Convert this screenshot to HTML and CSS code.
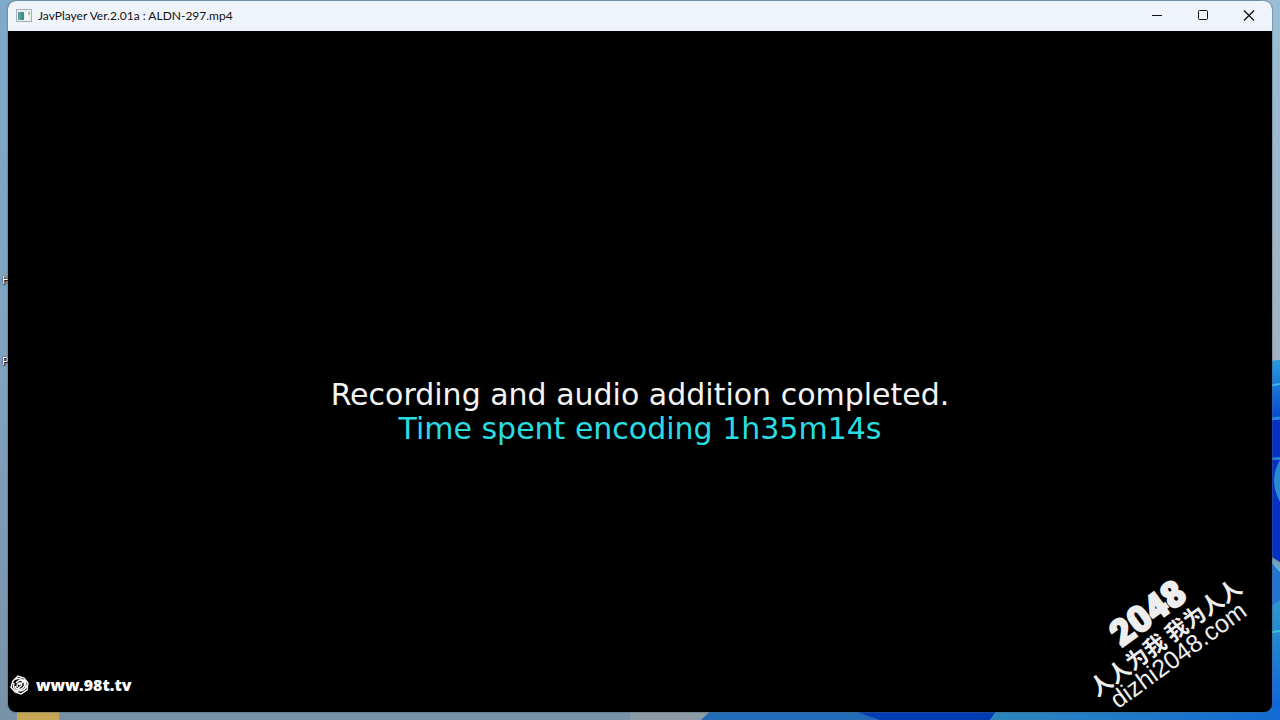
FILE: index.html
```html
<!DOCTYPE html>
<html lang="en">
  <head>
    <meta charset="UTF-8" />
    <meta name="viewport" content="width=device-width, initial-scale=1.0" />
    <title>JavPlayer Ver.2.01a : ALDN-297.mp4</title>
    <link rel="stylesheet" href="styles.css">
  </head>

  <body>
    <div class="desktop">
      <svg class="wallpaper" viewBox="0 0 1280 720" preserveAspectRatio="none" aria-hidden="true">
        <defs>
          <linearGradient id="sky" x1="0" y1="0" x2="0" y2="1">
            <stop offset="0" stop-color="#7eaaca" />
            <stop offset="0.5" stop-color="#80a3bf" />
            <stop offset="1" stop-color="#7892a8" />
          </linearGradient>
          <linearGradient id="side" x1="0" y1="0" x2="0" y2="1">
            <stop offset="0" stop-color="#98bed5" />
            <stop offset="1" stop-color="#a3b2c2" />
          </linearGradient>
          <linearGradient id="petal" x1="0" y1="0" x2="0" y2="1">
            <stop offset="0" stop-color="#289be0" />
            <stop offset="1" stop-color="#0746ce" />
          </linearGradient>
          <linearGradient id="low" x1="0" y1="0" x2="0" y2="1">
            <stop offset="0" stop-color="#2f99cc" />
            <stop offset="1" stop-color="#0b5fdd" />
          </linearGradient>
          <linearGradient id="edge" x1="0" y1="0" x2="1" y2="0">
            <stop offset="0" stop-color="#2e86bc" />
            <stop offset="1" stop-color="#126bd4" />
          </linearGradient>
        </defs>
        <rect width="1280" height="720" fill="url(#sky)" />
        <rect x="1260" width="20" height="362" fill="url(#side)" />
        <path d="M1260 364 Q1272 360 1280 360 V420 H1260Z" fill="url(#petal)" />
        <path d="M1260 387 L1280 384" stroke="#38b7e5" stroke-width="2" />
        <path d="M1260 420 L1280 418 V562 L1260 550Z" fill="#0631c4" />
        <path d="M1260 420 L1280 418" stroke="#2488df" stroke-width="3" />
        <path d="M1260 459 L1280 457 V502 Q1268 480 1280 460Z" fill="#278bd0" />
        <path d="M1260 550 Q1272 560 1280 571 V606 L1260 614Z" fill="#2475d2" />
        <path d="M1260 550 Q1272 560 1280 571" fill="none" stroke="#60b2e0" stroke-width="2" />
        <path d="M1260 612 Q1272 607 1280 600 V720 H1260Z" fill="url(#low)" />
        <path d="M1260 634 L1280 631" stroke="#35c5d5" stroke-width="2" />
        <path d="M630 705 H714 L701 720 H630Z" fill="#8d9ba6" />
        <path d="M714 708 H870 L888 720 H701Z" fill="#246cb8" />
        <path d="M846 708 H1000 L990 720 H880Z" fill="#023bb3" />
        <path d="M998 708 H1280 V720 H990Z" fill="url(#edge)" />
        <path d="M17 708 H59 V720 H17Z" fill="#c5a654" />
      </svg>
      <span class="icon-label icon-label-1">H</span>
      <span class="icon-label icon-label-2">P</span>

      <main class="window">
        <header class="titlebar">
          <svg class="app-icon" viewBox="0 0 16 14" aria-hidden="true">
            <rect x="0.5" y="0.5" width="15" height="12" fill="#e8eded" stroke="#a9b2bb" />
            <rect x="2" y="3" width="6" height="8" fill="#438f87" />
            <rect x="2" y="3" width="3" height="8" fill="#5d9ba5" />
            <rect x="9" y="3" width="4" height="8" fill="#f7f8f3" />
            <rect x="12" y="3" width="2" height="3" fill="#a6ca9c" />
          </svg>
          <h1 class="title">JavPlayer Ver.2.01a : ALDN-297.mp4</h1>
          <button class="control" type="button" aria-label="Minimize">
            <svg viewBox="0 0 12 12"><path d="M1 5.5 H11" /></svg>
          </button>
          <button class="control" type="button" aria-label="Maximize">
            <svg viewBox="0 0 12 12"><rect x="1.5" y="0.5" width="9" height="9" rx="1" /></svg>
          </button>
          <button class="control" type="button" aria-label="Close">
            <svg viewBox="0 0 12 12"><path d="M1 0.5 L11 10.5 M11 0.5 L1 10.5" stroke-width="1.3" /></svg>
          </button>
        </header>

        <section class="video">
          <div class="message">
            <p>Recording and audio addition completed.</p>
            <p class="elapsed">Time spent encoding 1h35m14s</p>
          </div>

          <div class="site">
            <svg class="rose" viewBox="0 0 20 20" aria-hidden="true">
              <path d="M3 6 L8 1 L14 3 L18 8 L17 15 L11 19 L5 17 L1 12Z" />
              <path d="M5 4 Q11 2 15 7 M14 4 Q18 10 14 15 M17 11 Q12 18 6 15 M8 17 Q2 14 4 8" />
              <path d="M6 8 Q10 3 14 7 Q16 12 11 14 Q6 15 5 11 M7 12 Q7 8 10 8 Q13 8 11 11 Q10 12 8 13 M9 10 L14 6" />
            </svg>
            <span>www.98t.tv</span>
          </div>

          <div class="watermark">
            <span class="mark-number">2048</span>
            <span class="mark-slogan" lang="zh">人人为我 我为人人</span>
            <span class="mark-domain">dizhi2048.com</span>
          </div>
        </section>
      </main>
    </div>
  </body>
</html>
```
FILE: styles.css
```css
* {
  box-sizing: border-box;
}

body {
  margin: 0;
  font-family: "Noto Sans", "Noto Sans CJK SC", sans-serif;
}

.desktop {
  position: relative;
  display: flex;
  min-height: 100vh;
  padding: 1px 8px 8px;
  overflow: hidden;
}

.wallpaper {
  position: absolute;
  inset: 0;
  width: 100%;
  height: 100%;
}

/* desktop shortcuts peeking out behind the window */
.icon-label {
  position: absolute;
  left: 2px;
  color: white;
  font-size: 11px;
  line-height: 16px;
  text-shadow: 1px 1px 1px black, 0 0 2px black;
}

.icon-label-1 {
  top: 272px;
}

.icon-label-2 {
  top: 353px;
}

.window {
  position: relative;
  flex: 1;
  display: flex;
  flex-direction: column;
  border-radius: 8px;
  overflow: hidden;
  background: black;
  box-shadow: 0 0 1px 1px rgba(80, 100, 120, 0.4);
}

.titlebar {
  display: flex;
  align-items: center;
  height: 30px;
  padding-left: 8px;
  background: #eff4fb;
}

.app-icon {
  width: 16px;
  height: 14px;
}

.title {
  flex: 1;
  margin: 0 0 0 6px;
  color: #111;
  font-family: "Segoe UI", Lato, sans-serif;
  font-size: 12px;
  font-weight: 400;
  line-height: 16px;
}

.control {
  display: flex;
  align-items: center;
  justify-content: center;
  width: 46px;
  height: 30px;
  padding: 0;
  border: 0;
  background: none;
}

.control:hover {
  background: #dde3ea;
}

.control svg {
  width: 12px;
  height: 12px;
  fill: none;
  stroke: #111;
}

.video {
  position: relative;
  flex: 1;
  display: flex;
  align-items: center;
  justify-content: center;
  padding-top: 80px;
}

.message {
  color: #f4f4f4;
  font-family: Verdana, "DejaVu Sans", sans-serif;
  font-size: 30px;
  line-height: 34px;
  text-align: center;
}

.message p {
  margin: 0;
}

.message .elapsed {
  color: #29dce0;
}

.site {
  position: absolute;
  left: 2px;
  bottom: 16px;
  display: flex;
  align-items: center;
  gap: 6px;
  color: white;
  font-family: "Noto Sans", sans-serif;
  font-size: 16px;
  font-weight: 900;
  line-height: 22px;
}

.rose {
  width: 20px;
  height: 20px;
  fill: none;
  stroke: white;
  stroke-width: 1.4;
}

.watermark {
  position: absolute;
  right: 20px;
  bottom: 40px;
  display: flex;
  flex-direction: column;
  align-items: center;
  color: #eee;
  white-space: nowrap;
  transform: rotate(-36deg);
}

.mark-number {
  font-family: Impact, Roboto, sans-serif;
  font-size: 36px;
  font-weight: 900;
  line-height: 34px;
  -webkit-text-stroke: 2px #eee;
}

.mark-slogan {
  font-family: "Noto Sans CJK SC", sans-serif;
  font-size: 22px;
  font-weight: 700;
  line-height: 22px;
}

.mark-domain {
  font-family: "Liberation Sans", Arial, sans-serif;
  font-size: 25px;
  line-height: 24px;
}
```
